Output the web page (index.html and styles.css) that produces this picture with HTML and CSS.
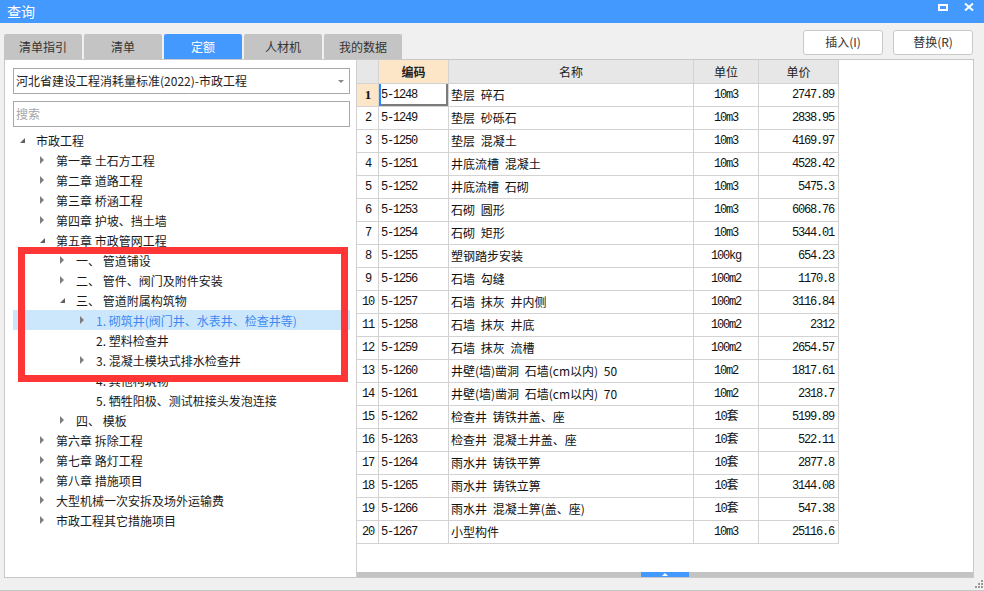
FILE: index.html
```html
<!DOCTYPE html>
<html lang="zh-CN">
<head>
<meta charset="utf-8">
<title>查询</title>
<link rel="stylesheet" href="styles.css">
</head>
<body>
<div class="window">
  <div class="titlebar">
    <span class="title">查询</span>
    <div class="winctl">
      <svg class="ico-max" width="10" height="7" viewBox="0 0 10 7"><rect x="1" y="1" width="8" height="5" fill="none" stroke="#fff" stroke-width="2"/></svg>
      <svg class="ico-close" width="10" height="8" viewBox="0 0 10 8"><path d="M1 0.5 L9 7.5 M9 0.5 L1 7.5" stroke="#fff" stroke-width="2"/></svg>
    </div>
  </div>

  <div class="toolbar">
    <div class="tabs">
      <span class="tab">清单指引</span>
      <span class="tab">清单</span>
      <span class="tab active">定额</span>
      <span class="tab">人材机</span>
      <span class="tab">我的数据</span>
    </div>
    <div class="btns">
      <span class="btn">插入(I)</span>
      <span class="btn">替换(R)</span>
    </div>
  </div>

  <div class="main">
    <div class="left">
      <div class="select">河北省建设工程消耗量标准(2022)-市政工程<span class="caret"></span></div>
      <div class="search">搜索</div>
      <div class="tree">
        <div class="node lv0"><span class="tw"><i class="open"></i></span><span>市政工程</span></div>
        <div class="node lv1"><span class="tw"><i class="shut"></i></span><span>第一章 土石方工程</span></div>
        <div class="node lv1"><span class="tw"><i class="shut"></i></span><span>第二章 道路工程</span></div>
        <div class="node lv1"><span class="tw"><i class="shut"></i></span><span>第三章 桥涵工程</span></div>
        <div class="node lv1"><span class="tw"><i class="shut"></i></span><span>第四章 护坡、挡土墙</span></div>
        <div class="node lv1"><span class="tw"><i class="open"></i></span><span>第五章 市政管网工程</span></div>
        <div class="node lv2"><span class="tw"><i class="shut"></i></span><span>一、 管道铺设</span></div>
        <div class="node lv2"><span class="tw"><i class="shut"></i></span><span>二、 管件、阀门及附件安装</span></div>
        <div class="node lv2"><span class="tw"><i class="open"></i></span><span>三、 管道附属构筑物</span></div>
        <div class="node lv3 sel"><span class="tw"><i class="shut"></i></span><span>1. 砌筑井(阀门井、水表井、检查井等)</span></div>
        <div class="node lv3"><span class="tw"></span><span>2. 塑料检查井</span></div>
        <div class="node lv3"><span class="tw"><i class="shut"></i></span><span>3. 混凝土模块式排水检查井</span></div>
        <div class="node lv3"><span class="tw"></span><span>4. 其他构筑物</span></div>
        <div class="node lv3"><span class="tw"></span><span>5. 牺牲阳极、测试桩接头发泡连接</span></div>
        <div class="node lv2"><span class="tw"><i class="shut"></i></span><span>四、 模板</span></div>
        <div class="node lv1"><span class="tw"><i class="shut"></i></span><span>第六章 拆除工程</span></div>
        <div class="node lv1"><span class="tw"><i class="shut"></i></span><span>第七章 路灯工程</span></div>
        <div class="node lv1"><span class="tw"><i class="shut"></i></span><span>第八章 措施项目</span></div>
        <div class="node lv1"><span class="tw"><i class="shut"></i></span><span>大型机械一次安拆及场外运输费</span></div>
        <div class="node lv1"><span class="tw"><i class="shut"></i></span><span>市政工程其它措施项目</span></div>
      </div>
    </div>

    <div class="right">
      <div class="grid">
        <div class="row head">
          <span class="c rn"></span><span class="c cd hot">编码</span><span class="c nm ctr">名称</span><span class="c un">单位</span><span class="c pr ctr">单价</span>
        </div>
        <div class="row"><span class="c rn hotn">1</span><span class="c cd focus">5-1248</span><span class="c nm">垫层 碎石</span><span class="c un">10m3</span><span class="c pr">2747.89</span></div>
        <div class="row"><span class="c rn">2</span><span class="c cd">5-1249</span><span class="c nm">垫层 砂砾石</span><span class="c un">10m3</span><span class="c pr">2838.95</span></div>
        <div class="row"><span class="c rn">3</span><span class="c cd">5-1250</span><span class="c nm">垫层 混凝土</span><span class="c un">10m3</span><span class="c pr">4169.97</span></div>
        <div class="row"><span class="c rn">4</span><span class="c cd">5-1251</span><span class="c nm">井底流槽 混凝土</span><span class="c un">10m3</span><span class="c pr">4528.42</span></div>
        <div class="row"><span class="c rn">5</span><span class="c cd">5-1252</span><span class="c nm">井底流槽 石砌</span><span class="c un">10m3</span><span class="c pr">5475.3</span></div>
        <div class="row"><span class="c rn">6</span><span class="c cd">5-1253</span><span class="c nm">石砌 圆形</span><span class="c un">10m3</span><span class="c pr">6068.76</span></div>
        <div class="row"><span class="c rn">7</span><span class="c cd">5-1254</span><span class="c nm">石砌 矩形</span><span class="c un">10m3</span><span class="c pr">5344.01</span></div>
        <div class="row"><span class="c rn">8</span><span class="c cd">5-1255</span><span class="c nm">塑钢踏步安装</span><span class="c un">100kg</span><span class="c pr">654.23</span></div>
        <div class="row"><span class="c rn">9</span><span class="c cd">5-1256</span><span class="c nm">石墙 勾缝</span><span class="c un">100m2</span><span class="c pr">1170.8</span></div>
        <div class="row"><span class="c rn">10</span><span class="c cd">5-1257</span><span class="c nm">石墙 抹灰 井内侧</span><span class="c un">100m2</span><span class="c pr">3116.84</span></div>
        <div class="row"><span class="c rn">11</span><span class="c cd">5-1258</span><span class="c nm">石墙 抹灰 井底</span><span class="c un">100m2</span><span class="c pr">2312</span></div>
        <div class="row"><span class="c rn">12</span><span class="c cd">5-1259</span><span class="c nm">石墙 抹灰 流槽</span><span class="c un">100m2</span><span class="c pr">2654.57</span></div>
        <div class="row"><span class="c rn">13</span><span class="c cd">5-1260</span><span class="c nm">井壁(墙)凿洞 石墙(cm以内) 50</span><span class="c un">10m2</span><span class="c pr">1817.61</span></div>
        <div class="row"><span class="c rn">14</span><span class="c cd">5-1261</span><span class="c nm">井壁(墙)凿洞 石墙(cm以内) 70</span><span class="c un">10m2</span><span class="c pr">2318.7</span></div>
        <div class="row"><span class="c rn">15</span><span class="c cd">5-1262</span><span class="c nm">检查井 铸铁井盖、座</span><span class="c un">10套</span><span class="c pr">5199.89</span></div>
        <div class="row"><span class="c rn">16</span><span class="c cd">5-1263</span><span class="c nm">检查井 混凝土井盖、座</span><span class="c un">10套</span><span class="c pr">522.11</span></div>
        <div class="row"><span class="c rn">17</span><span class="c cd">5-1264</span><span class="c nm">雨水井 铸铁平箅</span><span class="c un">10套</span><span class="c pr">2877.8</span></div>
        <div class="row"><span class="c rn">18</span><span class="c cd">5-1265</span><span class="c nm">雨水井 铸铁立箅</span><span class="c un">10套</span><span class="c pr">3144.08</span></div>
        <div class="row"><span class="c rn">19</span><span class="c cd">5-1266</span><span class="c nm">雨水井 混凝土箅(盖、座)</span><span class="c un">10套</span><span class="c pr">547.38</span></div>
        <div class="row"><span class="c rn">20</span><span class="c cd">5-1267</span><span class="c nm">小型构件</span><span class="c un">10m3</span><span class="c pr">25116.6</span></div>
      </div>
      <div class="hscroll"><span class="thumb"><i></i></span></div>
    </div>
  </div>

  <div class="statusbar">
    <svg class="grip" width="8" height="8" viewBox="0 0 8 8">
      <rect x="6" y="0" width="2" height="2" fill="#9a9a9a"/>
      <rect x="3" y="3" width="2" height="2" fill="#9a9a9a"/><rect x="6" y="3" width="2" height="2" fill="#9a9a9a"/>
      <rect x="0" y="6" width="2" height="2" fill="#9a9a9a"/><rect x="3" y="6" width="2" height="2" fill="#9a9a9a"/><rect x="6" y="6" width="2" height="2" fill="#9a9a9a"/>
    </svg>
  </div>

  <div class="mark"></div>
</div>
</body>
</html>
```

FILE: styles.css
```css
* { box-sizing: border-box; }
html, body { margin: 0; padding: 0; }
body {
  width: 984px;
  height: 591px;
  overflow: hidden;
  background: #f0f0f0;
  font-family: "Noto Sans CJK SC", "Microsoft YaHei", sans-serif;
  font-size: 12px;
  color: #222;
}
.window { position: relative; width: 984px; height: 591px; display: flex; flex-direction: column; }

/* title bar */
.titlebar {
  height: 23px;
  background: #4399fe;
  display: flex;
  align-items: flex-start;
  flex: none;
}
.title { color: #fff; font-size: 14px; line-height: 22px; padding-left: 7px; }
.winctl { margin-left: auto; display: flex; gap: 16px; padding: 4px 10px 0 0; }
.ico-close { margin-top: -1px; }

/* toolbar */
.toolbar {
  height: 36px;
  flex: none;
  display: flex;
  justify-content: space-between;
  padding: 0 11px 0 4px;
}
.tabs { display: flex; gap: 2px; align-self: flex-end; }
.tab {
  width: 78px;
  height: 25px;
  background: #c4c4c4;
  border-radius: 2px 2px 0 0;
  text-align: center;
  line-height: 25px;
  color: #333;
}
.tab.active { background: #4399fe; color: #fff; }
.btns { display: flex; gap: 10px; padding-top: 7px; }
.btn {
  width: 80px;
  height: 25px;
  background: #fff;
  border: 1px solid #c9c9c9;
  border-radius: 3px;
  text-align: center;
  line-height: 22px;
  color: #333;
}

/* main */
.main {
  height: 519px;
  flex: none;
  margin: 0 10px 0 4px;
  border: 1px solid #c8c8c8;
  display: flex;
  background: #fff;
}
.left { width: 351px; flex: none; padding: 8px 6px 0 8px; }
.select, .search {
  height: 26px;
  border: 1px solid #a9a9a9;
  padding-left: 2px;
  line-height: 24px;
  position: relative;
}
.select { color: #222; }
.caret {
  position: absolute;
  right: 5px;
  top: 11px;
  border-left: 3px solid transparent;
  border-right: 3px solid transparent;
  border-top: 3px solid #8a8a8a;
}
.search { margin-top: 7px; color: #a6a6a6; }

.tree { margin-top: 3px; }
.node { height: 20px; display: flex; align-items: center; color: #1a1a1a; white-space: nowrap; }
.node.lv0 { padding-left: 7px; }
.node.lv1 { padding-left: 27px; }
.node.lv2 { padding-left: 47px; }
.node.lv3 { padding-left: 67px; }
.node.sel { background: #cce6fc; color: #3d8bf2; }
.tw { width: 16px; height: 20px; flex: none; display: flex; align-items: center; }
.tw .shut {
  width: 0; height: 0;
  border-top: 4px solid transparent;
  border-bottom: 4px solid transparent;
  border-left: 4px solid #7e7e7e;
}
.tw .open {
  width: 0; height: 0;
  border-left: 5px solid transparent;
  border-bottom: 5px solid #5f5f5f;
  margin-top: 1px;
}

/* right grid */
.right {
  flex: 1;
  border-left: 1px solid #d0d0d0;
  display: flex;
  flex-direction: column;
  justify-content: space-between;
}
.grid { display: flex; flex-direction: column; }
.row { display: flex; height: 23px; }
.row.head { height: 24px; }
.c {
  height: 100%;
  border-right: 1px solid #d3d3d3;
  border-bottom: 1px solid #d3d3d3;
  font-family: "Liberation Mono", "Noto Sans CJK SC", monospace;
  font-size: 12px;
  letter-spacing: -1.2px;
  line-height: 22px;
  white-space: nowrap;
  overflow: hidden;
  color: #111;
}
.rn { width: 22px; text-align: center; background: #fff; padding-left: 1px; }
.cd { width: 70px; padding-left: 2px; }
.nm { width: 245px; padding-left: 2px; font-family: "Noto Sans CJK SC", sans-serif; font-size: 12px; letter-spacing: 0; word-spacing: 3px; }
.un { width: 65px; text-align: center; }
.pr { width: 80px; text-align: right; padding-right: 4px; }
.head .c {
  background: #e7e7e7;
  font-family: "Noto Sans CJK SC", sans-serif;
  font-size: 12px;
  letter-spacing: 0;
  line-height: 23px;
  text-align: center;
  color: #222;
  padding: 0;
}
.head .c.hot { background: #fde5c7; font-weight: bold; }
.rn.hotn { background: #fde5c7; font-weight: bold; font-family: "Liberation Serif", serif; font-size: 13px; letter-spacing: 0; }
.c.focus { box-shadow: inset 2px 0 0 #2f86fb, inset -2px -2px 0 #7b7b7b; }

.hscroll {
  height: 5px;
  background: #c3c3c3;
  position: relative;
  flex: none;
}
.thumb {
  position: absolute;
  left: 284px;
  top: 0;
  width: 48px;
  height: 5px;
  background: #4399fe;
  display: flex;
  justify-content: center;
  align-items: center;
}
.thumb i {
  width: 0; height: 0;
  border-left: 3px solid transparent;
  border-right: 3px solid transparent;
  border-bottom: 3px solid #fff;
}

/* status */
.statusbar {
  flex: 1;
  border-bottom: 1px solid #c8c8c8;
  display: flex;
  justify-content: flex-end;
  align-items: flex-start;
  padding: 2px 1px 0 0;
}

/* annotation */
.mark {
  position: absolute;
  left: 18px;
  top: 247px;
  width: 330px;
  height: 135px;
  border: 7px solid #fe3636;
}
```
